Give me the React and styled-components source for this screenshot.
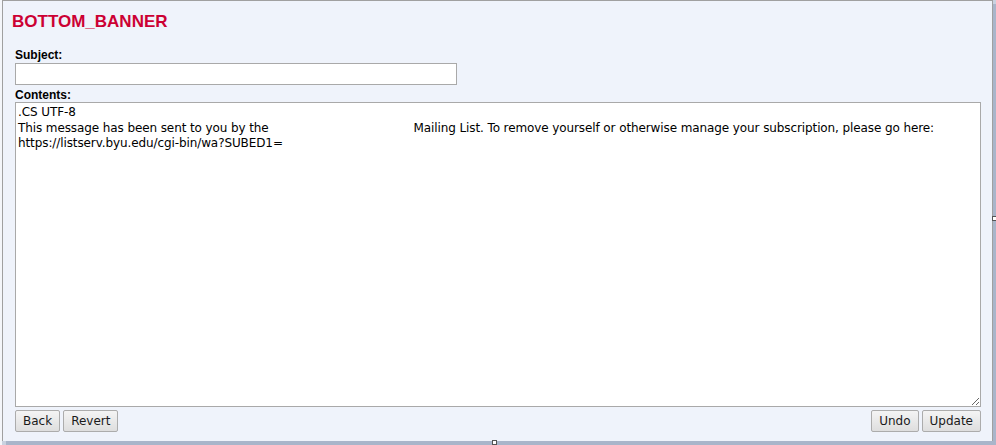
import React from "react";
import styled, { createGlobalStyle } from "styled-components";

const GlobalStyle = createGlobalStyle`
  html, body {
    margin: 0;
    padding: 0;
    background: #f4f6fa;
  }
  * {
    box-sizing: border-box;
  }
`;

const Frame = styled.div`
  position: relative;
  width: 996px;
  height: 445px;
  overflow: hidden;
`;

const Panel = styled.div`
  margin-left: 2px;
  width: 991px;
  height: 441px;
  border: 1px solid #a0a0a0;
  border-bottom: 0;
  background: #eff3fb;
  padding: 11px 0 0 9px;
  box-shadow: 4px 4px 0 #a9b5ca, 4px 0 0 #c9d2e0, 0 4px 0 #c9d2e0;
`;

const Title = styled.h2`
  margin: 0;
  font-family: "Liberation Sans", Arial, sans-serif;
  font-size: 17px;
  font-weight: bold;
  line-height: 20px;
  color: #cc0033;
`;

const Form = styled.form`
  display: flex;
  flex-direction: column;
  margin: 16px 0 0 3px;
  width: 966px;
`;

const Label = styled.label`
  display: block;
  margin-top: ${(p) => p.$top || 0}px;
  font-family: "Liberation Sans", Arial, sans-serif;
  font-size: 12px;
  font-weight: bold;
  line-height: 14px;
  color: #000;
`;

const TextInput = styled.input`
  width: 442px;
  height: 22px;
  margin: 1px 0 0;
  padding: 1px 3px;
  border: 1px solid #a9a9a9;
  background: #fff;
  font-family: "DejaVu Sans", Tahoma, sans-serif;
  font-size: 12px;
  outline: none;
`;

const Contents = styled.textarea`
  display: block;
  width: 966px;
  height: 305px;
  margin: 0;
  padding: 2px 2px 1px;
  border: 1px solid #a9a9a9;
  background: #fff;
  color: #000;
  font-family: "DejaVu Sans", Tahoma, sans-serif;
  font-size: 12px;
  letter-spacing: -0.1px;
  line-height: 15.5px;
  white-space: pre-wrap;
  overflow: auto;
  outline: none;
`;

const ButtonBar = styled.div`
  display: flex;
  justify-content: space-between;
  margin-top: 3px;
`;

const ButtonGroup = styled.div`
  display: flex;
  gap: 3px;
`;

const Button = styled.button`
  height: 22px;
  padding: 0 7px;
  border: 1px solid #acacac;
  border-radius: 2px;
  background: linear-gradient(#f4f4f4, #e9e9e9 50%, #dedede);
  color: #1a1a1a;
  font-family: "DejaVu Sans", Tahoma, sans-serif;
  font-size: 12px;
  line-height: 18px;
  cursor: pointer;

  &:hover {
    background: linear-gradient(#eaf6fd, #d9f0fc 50%, #bee6fd);
    border-color: #3c7fb1;
  }
`;

const Handle = styled.span`
  position: absolute;
  width: 5px;
  height: 5px;
  background: #fff;
  border: 1px solid #555;
`;

const gap = " ".repeat(39);
const body =
  ".CS UTF-8\n" +
  "This message has been sent to you by the" +
  gap +
  "Mailing List. To remove yourself or otherwise manage your subscription, please go here:\n" +
  "https://listserv.byu.edu/cgi-bin/wa?SUBED1=";

export default function App() {
  return (
    <>
      <GlobalStyle />
      <Frame>
        <Panel>
          <Title>BOTTOM_BANNER</Title>
          <Form onSubmit={(e) => e.preventDefault()}>
            <Label htmlFor="subject">Subject:</Label>
            <TextInput id="subject" type="text" defaultValue="" />
            <Label htmlFor="contents" $top={3}>
              Contents:
            </Label>
            <Contents id="contents" defaultValue={body} spellCheck={false} />
            <ButtonBar>
              <ButtonGroup>
                <Button type="button">Back</Button>
                <Button type="button">Revert</Button>
              </ButtonGroup>
              <ButtonGroup>
                <Button type="button">Undo</Button>
                <Button type="button">Update</Button>
              </ButtonGroup>
            </ButtonBar>
          </Form>
        </Panel>
        <Handle style={{ left: 992, top: 216 }} />
        <Handle style={{ left: 492, top: 440 }} />
      </Frame>
    </>
  );
}
